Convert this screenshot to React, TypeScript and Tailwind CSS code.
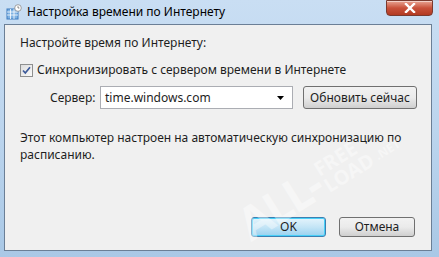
import React, { useState } from "react";

const font = { fontFamily: '"Noto Sans", "Open Sans", sans-serif' };

const ClockIcon: React.FC = () => (
  <svg width="16" height="16" viewBox="0 0 16 16">
    <rect x="1" y="5" width="11" height="10" fill="#7fb2e3" stroke="#3f7cc0" strokeWidth="1" />
    <path d="M1 8h11M1 11h11M4.5 5v10M8 5v10" stroke="#ffffff" strokeWidth="0.8" />
    <circle cx="12" cy="4" r="3.3" fill="#ffffff" stroke="#8a8a8a" strokeWidth="0.8" />
    <path d="M12 2.2V4h1.4" stroke="#555" strokeWidth="0.7" fill="none" />
  </svg>
);

const App: React.FC = () => {
  const [sync, setSync] = useState(true);

  return (
    <div
      className="relative h-[257px] w-[439px] overflow-hidden bg-gradient-to-b from-[#c9def3] via-[#bcd5ee] to-[#a9c8e6] text-[12px] text-[#1e1e1e]"
      style={font}
    >
      {/* title bar */}
      <div className="flex h-[24px] items-start">
        <div className="flex h-[24px] flex-1 items-center gap-[5px] pl-[6px]">
          <ClockIcon />
          <span className="text-[12px] text-black">Настройка времени по Интернету</span>
        </div>
        <button className="mr-[6px] flex h-[16px] w-[47px] items-center justify-center rounded-b-[4px] border border-[#7a3a2e] bg-gradient-to-b from-[#e8a493] via-[#c9513a] to-[#b23a22] shadow-[inset_0_1px_0_rgba(255,255,255,0.5)]">
          <svg width="12" height="10" viewBox="0 0 12 10">
            <path d="M2 1l8 8M10 1L2 9" stroke="#ffffff" strokeWidth="2.4" strokeLinecap="square" />
          </svg>
        </button>
      </div>

      {/* client area */}
      <div className="ml-[4px] mr-[7px] h-[227px] border border-[#6b7f96] bg-[#f0f0f0]">
        <div className="flex flex-col pl-[15px] pt-[10px]">
          <div className="h-[16px] leading-[16px]">Настройте время по Интернету:</div>

          <label className="mt-[11px] flex h-[16px] items-center gap-[4px]">
            <span
              onClick={() => setSync(!sync)}
              className="flex h-[13px] w-[13px] items-center justify-center border border-[#8e8f8f] bg-gradient-to-br from-[#dcdcdc] to-[#fafafa]"
            >
              {sync && (
                <svg width="9" height="9" viewBox="0 0 9 9">
                  <path d="M1 4.5l2.3 2.5L8 1.2" stroke="#3c5a9a" strokeWidth="1.7" fill="none" />
                </svg>
              )}
            </span>
            <span>Синхронизировать с сервером времени в Интернете</span>
          </label>

          <div className="mt-[8px] flex items-center">
            <span className="ml-[30px] w-[50px]">Сервер:</span>
            <div className="flex h-[23px] w-[193px] items-center justify-between border border-[#abadb3] bg-white pl-[4px] pr-[8px]">
              <span>time.windows.com</span>
              <svg width="7" height="4" viewBox="0 0 7 4">
                <path d="M0 0h7L3.5 4z" fill="#000" />
              </svg>
            </div>
            <button className="ml-[10px] h-[23px] w-[114px] rounded-[3px] border border-[#707070] bg-gradient-to-b from-[#f2f2f2] via-[#ebebeb] to-[#cfcfcf] text-[12px]">
              Обновить сейчас
            </button>
          </div>

          <div className="mt-[20px] w-[400px] leading-[17px]">
            Этот компьютер настроен на автоматическую синхронизацию по расписанию.
          </div>
        </div>

        <div className="mt-[54px] flex justify-end gap-[13px] pr-[16px]">
          <button className="h-[20px] w-[75px] rounded-[3px] border border-[#3c7fb1] bg-gradient-to-b from-[#e5f4fc] via-[#c4e5f6] to-[#98d1ef] text-[12px] leading-none shadow-[inset_0_0_0_1px_#48d0f8]">
            OK
          </button>
          <button className="h-[20px] w-[76px] rounded-[3px] border border-[#707070] bg-gradient-to-b from-[#f2f2f2] via-[#ebebeb] to-[#cfcfcf] text-[12px] leading-none">
            Отмена
          </button>
        </div>
      </div>

      {/* watermark */}
      <div className="pointer-events-none absolute left-[252px] top-[196px] flex h-[48px] origin-bottom-left -rotate-[32deg] select-none items-end gap-[4px] whitespace-nowrap font-bold leading-none text-white opacity-40">
        <span className="text-[46px] leading-[40px] tracking-tighter">ALL-</span>
        <span className="flex flex-col text-[20px] leading-[19px]">
          <span>FREE</span>
          <span>LOAD</span>
        </span>
        <span className="mb-[2px] text-[12px]">.NET</span>
      </div>
    </div>
  );
};

export default App;
